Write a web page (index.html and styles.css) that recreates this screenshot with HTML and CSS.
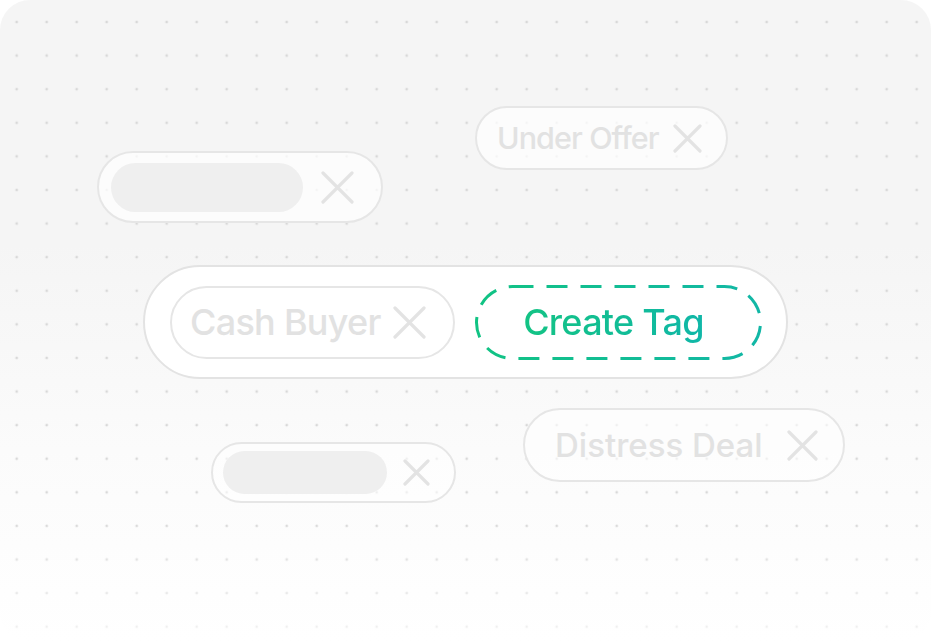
FILE: index.html
```html
<!DOCTYPE html>
<html lang="en">
<head>
<meta charset="utf-8">
<title>Tags</title>
<link rel="stylesheet" href="styles.css">
</head>
<body>
<div class="card">
  <div class="dots"></div>

  <div class="tag tag-under">
    <span class="label">Under Offer</span>
    <svg class="x x-29" viewBox="0 0 29 29"><path d="M2 2L27 27M27 2L2 27"/></svg>
  </div>

  <div class="tag tag-ph1">
    <span class="ph ph-1"></span>
    <svg class="x x-33" viewBox="0 0 33 33"><path d="M2 2L31 31M31 2L2 31"/></svg>
  </div>

  <div class="group">
    <div class="tag tag-cash">
      <span class="label">Cash Buyer</span>
      <svg class="x x-33" viewBox="0 0 33 33"><path d="M2 2L31 31M31 2L2 31"/></svg>
    </div>
    <div class="create">
      <svg class="dash" viewBox="0 0 287 75">
        <defs>
          <linearGradient id="g" x1="0" y1="0" x2="1" y2="0">
            <stop offset="0" stop-color="#11c383"/>
            <stop offset="1" stop-color="#12b7a6"/>
          </linearGradient>
        </defs>
        <rect x="1.5" y="1.5" width="284" height="72" rx="36" ry="36" fill="none" stroke="url(#g)" stroke-width="3" stroke-dasharray="21 13"/>
      </svg>
      <span class="create-label">Create Tag</span>
    </div>
  </div>

  <div class="tag tag-ph2">
    <span class="ph ph-2"></span>
    <svg class="x x-27" viewBox="0 0 27 27"><path d="M2 2L25 25M25 2L2 25"/></svg>
  </div>

  <div class="tag tag-distress">
    <span class="label">Distress Deal</span>
    <svg class="x x-31" viewBox="0 0 31 31"><path d="M2 2L29 29M29 2L2 29"/></svg>
  </div>
</div>
</body>
</html>
```

FILE: styles.css
```css
html, body {
  margin: 0;
  padding: 0;
  background: #ffffff;
}

.card {
  position: relative;
  width: 931px;
  height: 642px;
  border-radius: 30px;
  overflow: hidden;
  background: linear-gradient(180deg, #f5f5f5 0%, #f5f5f5 38%, #fbfbfb 70%, #ffffff 100%);
  font-family: "Inter", "Noto Sans", sans-serif;
}

.dots {
  position: absolute;
  inset: 0;
  background-image: radial-gradient(circle, #d8d8d8 1.1px, rgba(216,216,216,0) 1.7px);
  background-size: 30px 33.6px;
  background-position: 1.7px 5.2px;
  -webkit-mask-image: linear-gradient(180deg, #000 0%, #000 80%, rgba(0,0,0,0.3) 100%);
  mask-image: linear-gradient(180deg, #000 0%, #000 80%, rgba(0,0,0,0.3) 100%);
}

.tag {
  box-sizing: border-box;
  display: flex;
  align-items: center;
  border: 2px solid #e6e6e6;
  border-radius: 999px;
  background: rgba(255, 255, 255, 0.72);
  color: #e2e2e2;
  font-weight: 450;
  white-space: nowrap;
}

.label {
  letter-spacing: -0.02em;
  line-height: 1;
}

.x {
  flex: none;
  margin-left: auto;
  fill: none;
  stroke: #e3e3e3;
  stroke-width: 3.2;
  stroke-linecap: round;
}
.x-27 { width: 27px; height: 27px; }
.x-29 { width: 29px; height: 29px; }
.x-31 { width: 31px; height: 31px; }
.x-33 { width: 33px; height: 33px; }

.ph {
  display: block;
  flex: none;
  border-radius: 999px;
  background: #efefef;
}

/* free-canvas tags */
.tag-under {
  position: absolute;
  left: 475px;
  top: 106px;
  width: 253px;
  height: 64px;
  padding: 0 24px 0 20px;
  font-size: 30.5px;
}
.tag-under .label { letter-spacing: -0.03em; }

.tag-ph1 {
  position: absolute;
  left: 97px;
  top: 151px;
  width: 286px;
  height: 72px;
  padding: 0 27px 0 12px;
}
.ph-1 { width: 192px; height: 49px; }

.tag-ph2 {
  position: absolute;
  left: 211px;
  top: 442px;
  width: 245px;
  height: 61px;
  padding: 0 24px 0 10px;
  background: rgba(255, 255, 255, 0.6);
}
.ph-2 { width: 164px; height: 43px; }

.tag-distress {
  position: absolute;
  left: 523px;
  top: 408px;
  width: 322px;
  height: 74px;
  padding: 0 25px 0 30px;
  font-size: 33px;
  background: rgba(255, 255, 255, 0.6);
}
.tag-distress .label { letter-spacing: 0; }

.group {
  position: absolute;
  left: 143px;
  top: 265px;
  box-sizing: border-box;
  width: 645px;
  height: 114px;
  display: flex;
  align-items: center;
  gap: 20px;
  padding: 0 24px 0 25px;
  border: 2px solid #e3e3e3;
  border-radius: 999px;
  background: #ffffff;
}

.tag-cash {
  width: 285px;
  height: 73px;
  padding: 0 27px 0 18px;
  font-size: 36px;
  background: #ffffff;
}

.create {
  position: relative;
  flex: none;
  width: 287px;
  height: 75px;
  display: flex;
  align-items: center;
  justify-content: center;
  padding-right: 10px;
  box-sizing: border-box;
}

.dash {
  position: absolute;
  left: 0;
  top: 0;
  width: 287px;
  height: 75px;
}

.create-label {
  position: relative;
  font-size: 36px;
  font-weight: 500;
  line-height: 1.4;
  letter-spacing: -0.02em;
  background: linear-gradient(90deg, #13c384 0%, #12bc98 60%, #10b7a8 100%);
  -webkit-background-clip: text;
  background-clip: text;
  color: transparent;
}
```
